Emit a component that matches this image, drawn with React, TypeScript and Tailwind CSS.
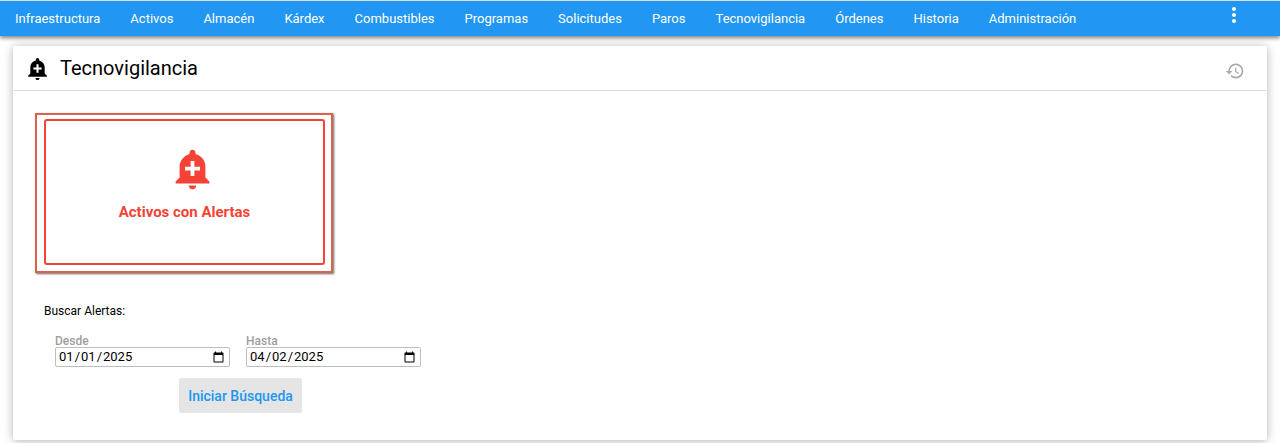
import { useState } from "react";
import { MdAddAlert, MdHistory, MdMoreVert } from "react-icons/md";

const menus = [
  { name: "Infraestructura", link: "#infraestructura" },
  { name: "Activos", link: "#activos" },
  { name: "Almacén", link: "#almacen" },
  { name: "Kárdex", link: "#kardex" },
  { name: "Combustibles", link: "#combustibles" },
  { name: "Programas", link: "#programas" },
  { name: "Solicitudes", link: "#solicitudes" },
  { name: "Paros", link: "#paros" },
  { name: "Tecnovigilancia", link: "#tecnovigilancia" },
  { name: "Órdenes", link: "#ordenes" },
  { name: "Historia", link: "#historia" },
  { name: "Administración", link: "#administracion" },
];

const Navbar = () => (
  <nav className="relative z-10 flex h-9 items-center justify-between border-t border-[#dddddd] bg-[#2196f3] shadow-[0_2px_4px_rgba(0,0,0,0.5)]">
    <ul className="flex">
      {menus.map((menu) => (
        <li key={menu.name}>
          <a href={menu.link} className="block px-[15px] text-[13px] leading-9 text-white">
            {menu.name}
          </a>
        </li>
      ))}
    </ul>
    <button type="button" aria-label="Más opciones" className="mr-[34px] mb-[7px] text-white">
      <MdMoreVert size={24} />
    </button>
  </nav>
);

type DateFieldProps = {
  id: string;
  label: string;
  value: string;
  onChange: (value: string) => void;
};

const DateField = ({ id, label, value, onChange }: DateFieldProps) => (
  <div className="w-[175px]">
    <label htmlFor={id} className="block text-xs leading-3 font-medium text-[#9e9e9e]">
      {label}
    </label>
    <input
      id={id}
      type="date"
      value={value}
      onChange={(e) => onChange(e.target.value)}
      className="block h-5 w-full rounded-xs border border-[#bdbdbd] px-[2px] text-[13px] leading-4 text-black"
    />
  </div>
);

const App = () => {
  const [desde, setDesde] = useState("2025-01-01");
  const [hasta, setHasta] = useState("2025-04-02");

  return (
    <div className="bg-white font-[Roboto,sans-serif] text-black">
      <Navbar />
      <main className="mx-[13px] mt-[10px] mb-[3px] rounded-xs bg-white shadow-[0_1px_10px_rgba(0,0,0,0.3)]">
        <header className="flex h-[45px] items-center justify-between border-b border-[#dddddd] px-3">
          <div className="flex items-center gap-[10px]">
            <MdAddAlert size={25} />
            <h1 className="text-xl">Tecnovigilancia</h1>
          </div>
          <button type="button" aria-label="Historial" className="mt-[5px] mr-[10px] text-[#a8a8a8]">
            <MdHistory size={20} />
          </button>
        </header>

        <div className="px-[22px] pt-[22px] pb-[27px]">
          {/* Alert tile */}
          <div className="w-[298px] border-2 border-[#d9634a] px-[7px] pt-1 pb-[6px] shadow-[1px_1px_2px_rgba(0,0,0,0.6)]">
            <button
              type="button"
              className="flex h-[146px] w-[281px] flex-col items-center rounded-[3px] border-2 border-[#f44336] pt-[25px] text-[#f44336]"
            >
              <MdAddAlert size={45} className="ml-[15px]" />
              <span className="mt-[11px] text-[15px] leading-5 font-bold">Activos con Alertas</span>
            </button>
          </div>

          {/* Date search */}
          <form className="mt-[30px] ml-[9px] w-[393px]" onSubmit={(e) => e.preventDefault()}>
            <p className="text-xs">Buscar Alertas:</p>
            <div className="mt-4 ml-[11px] flex gap-4">
              <DateField id="desde" label="Desde" value={desde} onChange={setDesde} />
              <DateField id="hasta" label="Hasta" value={hasta} onChange={setHasta} />
            </div>
            <div className="mt-[11px] flex justify-center">
              <button
                type="submit"
                className="h-[35px] rounded-xs bg-[#e5e5e5] px-[9px] text-sm font-medium text-[#2196f3]"
              >
                Iniciar Búsqueda
              </button>
            </div>
          </form>
        </div>
      </main>
    </div>
  );
};

export default App;
